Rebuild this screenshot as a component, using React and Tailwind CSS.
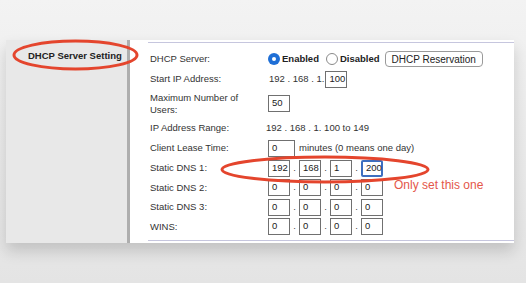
import React from 'react';

const font = { fontFamily: '"Liberation Sans", Arial, sans-serif' };

function Box({ value, w = 'w-[22px]', focused = false }) {
  return (
    <div
      className={
        'h-[17px] ' +
        w +
        ' flex items-center px-[3px] text-[9.5px] text-[#222] bg-white ' +
        (focused
          ? 'border-2 border-[#3d6fc0] rounded-[2px] px-[2px]'
          : 'border border-[#707070]')
      }
    >
      {value}
    </div>
  );
}

function IpBoxes({ values, focusLast = false }) {
  return (
    <div className="flex items-center">
      {values.map((v, i) => (
        <React.Fragment key={i}>
          {i > 0 && <span className="w-[9px] text-center text-[9.5px] text-[#444]">.</span>}
          <Box value={v} focused={focusLast && i === values.length - 1} />
        </React.Fragment>
      ))}
    </div>
  );
}

function Row({ label, children, h = 'h-[20px]' }) {
  return (
    <div className={'flex items-center ' + h}>
      <div className="w-[118px] shrink-0 text-[9.5px] leading-[12px] text-[#333]">{label}</div>
      <div className="flex items-center text-[9.5px] text-[#333]">{children}</div>
    </div>
  );
}

export default function App() {
  return (
    <div
      className="relative w-[526px] h-[283px] overflow-hidden bg-gradient-to-b from-[#f3f3f3] to-[#e4e4e4]"
      style={font}
    >
      <div className="pt-[40px] pl-[6px]">
        <div className="flex w-[508px] h-[203px] shadow-[0_8px_14px_rgba(0,0,0,0.16)]">
          {/* left navigation panel */}
          <div className="w-[124px] bg-[#e8e8e8] border-r-[3px] border-[#aeaeae] pt-[9px] pl-[22px]">
            <div className="text-[9.5px] font-bold text-[#222]">DHCP Server Setting</div>
          </div>

          {/* settings area */}
          <div className="flex-1 bg-white pt-[2px] pb-[2px] pl-[18px] flex flex-col">
            <div className="flex-1 border-y border-[#c6c6de] pl-[2px] pt-[6px]">
              <Row label="DHCP Server:">
                <span className="w-[12px] h-[12px] rounded-full bg-[#1f6fd6] flex items-center justify-center">
                  <span className="w-[4px] h-[4px] rounded-full bg-white" />
                </span>
                <span className="ml-[2px] font-bold text-[#222]">Enabled</span>
                <span className="ml-[7px] w-[12px] h-[12px] rounded-full border border-[#8a8a8a] bg-white" />
                <span className="ml-[2px] font-bold text-[#222]">Disabled</span>
                <span className="ml-[5px] h-[16px] px-[6px] flex items-center rounded-[4px] border border-[#9a9a9a] bg-white text-[10px] text-[#222]">
                  DHCP Reservation
                </span>
              </Row>
              <Row label="Start IP Address:">
                <span className="ml-[1px] mr-[1px]">192 . 168 . 1.</span>
                <Box value="100" />
              </Row>
              <Row
                h="h-[29px]"
                label={
                  <>
                    Maximum Number of
                    <br />
                    Users:
                  </>
                }
              >
                <Box value="50" />
              </Row>
              <Row label="IP Address Range:">
                <span className="-ml-[2px]">192 . 168 . 1. 100 to 149</span>
              </Row>
              <Row label="Client Lease Time:">
                <Box value="0" w="w-[27px]" />
                <span className="ml-[4px]">minutes (0 means one day)</span>
              </Row>
              <Row label="Static DNS 1:">
                <IpBoxes values={['192', '168', '1', '200']} focusLast />
              </Row>
              <Row label="Static DNS 2:" h="h-[19px]">
                <IpBoxes values={['0', '0', '0', '0']} />
              </Row>
              <Row label="Static DNS 3:">
                <IpBoxes values={['0', '0', '0', '0']} />
              </Row>
              <Row label="WINS:" h="h-[19px]">
                <IpBoxes values={['0', '0', '0', '0']} />
              </Row>
            </div>
          </div>
        </div>
      </div>

      {/* annotations */}
      <div className="absolute left-[394px] top-[176px] text-[12px] text-[#e4574a]">Only set this one</div>
      <svg className="absolute left-0 top-0 pointer-events-none" width="526" height="283">
        <ellipse cx="75.5" cy="55" rx="61.5" ry="14" fill="none" stroke="#e4452d" strokeWidth="3" />
        <ellipse cx="325" cy="169.5" rx="103" ry="12.5" fill="none" stroke="#e4452d" strokeWidth="3" />
      </svg>
    </div>
  );
}
